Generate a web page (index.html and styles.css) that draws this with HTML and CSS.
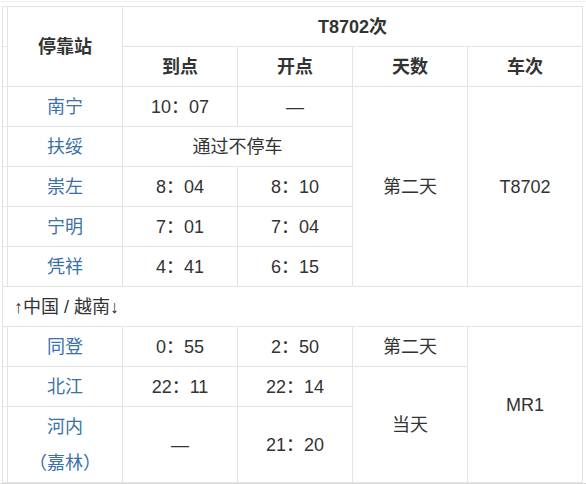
FILE: index.html
```html
<!DOCTYPE html>
<html lang="zh">
<head>
<meta charset="utf-8">
<link rel="stylesheet" href="styles.css">
</head>
<body>
<div class="wrap">
<table class="tt">
  <colgroup>
    <col class="c0"><col class="c"><col class="c"><col class="c"><col class="c"><col class="c">
  </colgroup>
  <tr>
    <td class="edge"></td>
    <th rowspan="2">停靠站</th>
    <th colspan="4">T8702次</th>
  </tr>
  <tr>
    <td class="edge"></td>
    <th>到点</th><th>开点</th><th>天数</th><th>车次</th>
  </tr>
  <tr>
    <td class="edge"></td>
    <td class="st">南宁</td><td>10：07</td><td>—</td>
    <td rowspan="5">第二天</td><td rowspan="5">T8702</td>
  </tr>
  <tr>
    <td class="edge"></td>
    <td class="st">扶绥</td><td colspan="2">通过不停车</td>
  </tr>
  <tr>
    <td class="edge"></td>
    <td class="st">崇左</td><td>8：04</td><td>8：10</td>
  </tr>
  <tr>
    <td class="edge"></td>
    <td class="st">宁明</td><td>7：01</td><td>7：04</td>
  </tr>
  <tr>
    <td class="edge"></td>
    <td class="st">凭祥</td><td>4：41</td><td>6：15</td>
  </tr>
  <tr>
    <td colspan="6" class="border">↑中国 / 越南↓</td>
  </tr>
  <tr>
    <td class="edge"></td>
    <td class="st">同登</td><td>0：55</td><td>2：50</td><td>第二天</td>
    <td rowspan="3">MR1</td>
  </tr>
  <tr>
    <td class="edge"></td>
    <td class="st">北江</td><td>22：11</td><td>22：14</td>
    <td rowspan="2">当天</td>
  </tr>
  <tr>
    <td class="edge"></td>
    <td class="st">河内<br>（嘉林）</td><td>—</td><td>21：20</td>
  </tr>
</table>
</div>
<div class="bottom"></div>
</body>
</html>
```

FILE: styles.css
```css
html, body {
  margin: 0;
  padding: 0;
  background: #fff;
  overflow: hidden;
}
body {
  font-family: Arial, "Liberation Sans", "Noto Sans CJK SC", sans-serif;
  font-size: 18px;
  color: #333;
}
.wrap {
  padding-top: 4px;
  padding-left: 2px;
  border-top: 1px solid #f0f0f0;
  margin-top: 1px;
  height: 477px;
  overflow: hidden;
}
.tt {
  border-collapse: collapse;
  table-layout: fixed;
  width: 581px;
}
.c0 { width: 5px; }
.c { width: 115px; }
.tt th, .tt td {
  border: 1px solid #e3e3e3;
  padding: 2px 0 1px;
  line-height: 36px;
  text-align: center;
  vertical-align: middle;
  font-weight: normal;
}
.tt th {
  font-weight: bold;
  color: #333;
}
.tt td.edge { padding: 0; }
.tt td.st { color: #3a71ab; }
.tt td.border {
  text-align: left;
  padding-left: 11px;
}
.bottom {
  height: 3px;
  background: #d9d9d9;
}
```
